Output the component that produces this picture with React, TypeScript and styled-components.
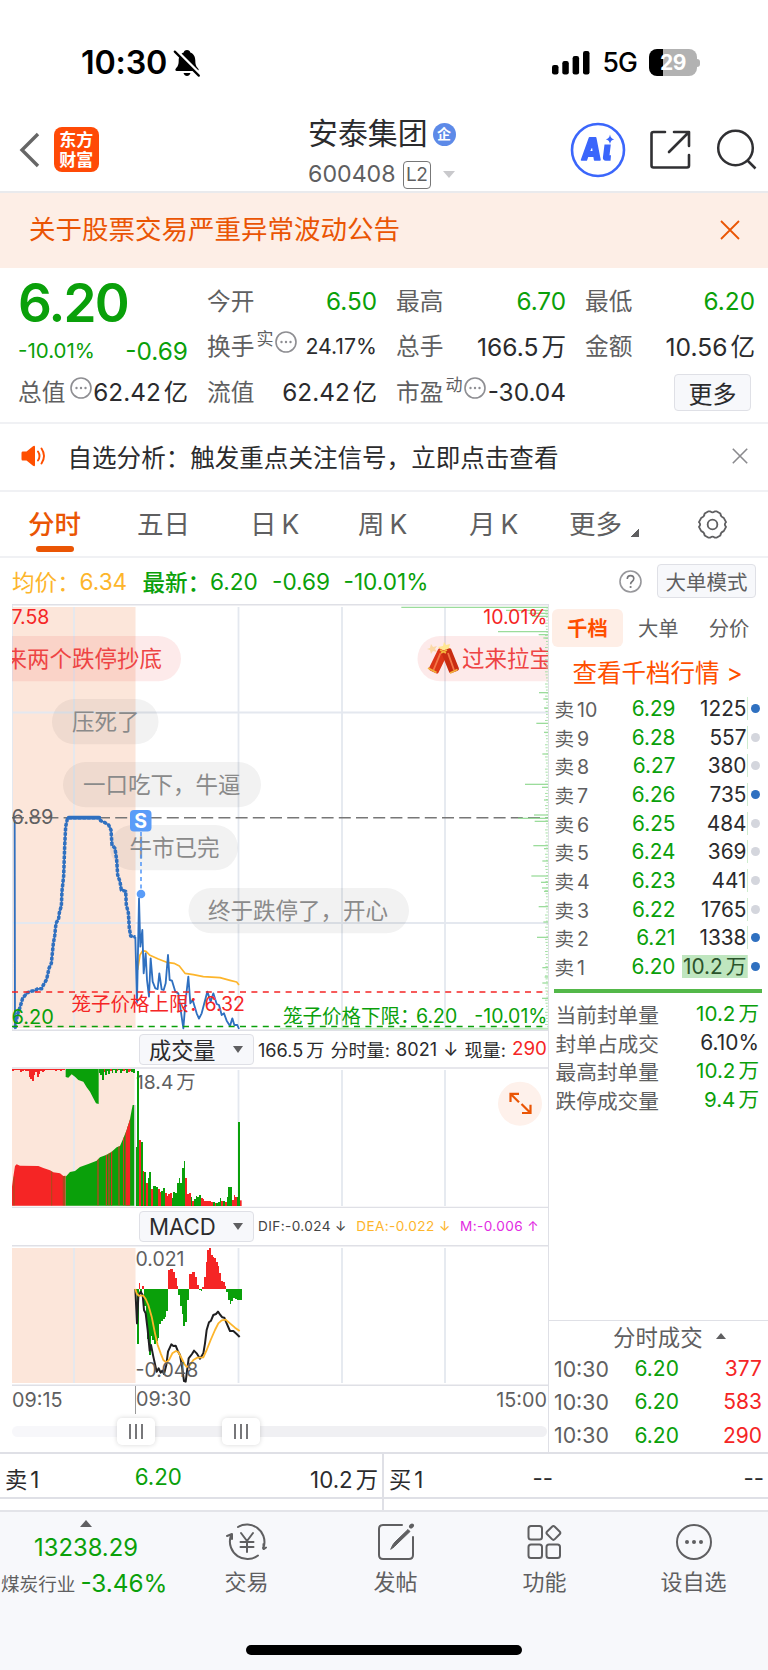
import React from "react";
import styled, { createGlobalStyle, css } from "styled-components";

const C = {
  green: "#0aa00a",
  red: "#f52525",
  orange: "#ea5504",
  bright: "#ff4f00",
  amber: "#fdb52b",
  ink: "#2b2b2d",
  mid: "#5f5f61",
  line: "#dfe0e6",
  soft: "#f0f1f4",
  panel: "#f7f8fb",
  blue: "#2f70c0",
};
const FONT = 'Inter, "Noto Sans CJK SC", sans-serif';

const Global = createGlobalStyle`
  * { box-sizing: border-box; }
  body { margin: 0; background: #fff; font-family: ${FONT}; color: ${C.ink}; }
  svg { display: block; flex: none; }
  svg text { font-family: ${FONT}; }
`;

const Page = styled.div`
  width: 768px;
  height: 1670px;
  overflow: hidden;
  display: flex;
  flex-direction: column;
  white-space: nowrap;
`;

const Txt = styled.span<{ $s: number; $c?: string; $w?: number; $ls?: number }>`
  font-size: ${(p) => p.$s}px;
  color: ${(p) => p.$c ?? "inherit"};
  font-weight: ${(p) => p.$w ?? 400};
  letter-spacing: ${(p) => p.$ls ?? 0}px;
  line-height: 1.2;
`;
const Unit = styled.span`
  margin-left: 3px;
`;

/* status bar */
const StatusBar = styled.div`
  height: 108px;
  padding: 18px 68px 0 81px;
  display: flex;
  align-items: center;
  justify-content: space-between;
  color: #000;
`;
const StatusGroup = styled.div<{ $gap: number }>`
  display: flex;
  align-items: center;
  gap: ${(p) => p.$gap}px;
`;
const Battery = styled.div`
  width: 48px;
  height: 27px;
  border-radius: 8px;
  background: linear-gradient(90deg, #000 14px, #b2b2b2 14px);
  color: #fff;
  font-size: 21px;
  font-weight: 700;
  line-height: 27px;
  text-align: center;
  letter-spacing: -0.5px;
`;
const BatteryNub = styled.div`
  width: 3px;
  height: 8px;
  margin-left: -12px;
  border-radius: 0 3px 3px 0;
  background: #b2b2b2;
`;

/* navigation */
const Nav = styled.div`
  height: 85px;
  border-bottom: 2px solid #e9eaed;
  padding: 3px 11px 0 19px;
  display: grid;
  grid-template-columns: 289px 1fr 187px;
`;
const NavLeft = styled.div`
  display: flex;
  align-items: center;
  gap: 13.5px;
  padding-bottom: 4px;
`;
const Brand = styled.div`
  width: 45.5px;
  height: 45.5px;
  border-radius: 8px;
  background: #ff4a06;
  color: #fff;
  font-size: 17px;
  font-weight: 700;
  line-height: 20px;
  text-align: center;
  padding-top: 2px;
  font-family: "Noto Sans CJK SC", sans-serif;
`;
const TitleBox = styled.div`
  display: flex;
  flex-direction: column;
`;
const TitleLine = styled.div<{ $h: number; $gap: number }>`
  height: ${(p) => p.$h}px;
  display: flex;
  align-items: center;
  gap: ${(p) => p.$gap}px;
`;
const CorpBadge = styled.div`
  width: 23px;
  height: 23px;
  border-radius: 50%;
  background: #5d8ae8;
  color: #fff;
  font-size: 14px;
  font-weight: 700;
  line-height: 22px;
  text-align: center;
`;
const LevelBadge = styled.div`
  width: 28px;
  height: 28px;
  margin-right: 5px;
  border: 1.5px solid #777;
  border-radius: 4px;
  font-size: 19px;
  line-height: 26px;
  letter-spacing: -0.6px;
  text-align: center;
  color: ${C.mid};
`;
const NavRight = styled.div`
  display: flex;
  align-items: center;
  justify-content: space-between;
  padding-bottom: 3px;
`;
const Caret = styled.div<{ $up?: boolean; $w: number; $h: number; $c: string }>`
  width: 0;
  height: 0;
  border-left: ${(p) => p.$w / 2}px solid transparent;
  border-right: ${(p) => p.$w / 2}px solid transparent;
  ${(p) =>
    p.$up
      ? css`border-bottom: ${p.$h}px solid ${p.$c};`
      : css`border-top: ${p.$h}px solid ${p.$c};`}
`;

const Banner = styled.div`
  height: 75px;
  padding: 0 28px 1px 29px;
  background: #fdeee6;
  display: flex;
  align-items: center;
  justify-content: space-between;
`;

/* key figures */
const Figures = styled.div`
  height: 156px;
  padding: 11px 13px 0 18px;
  display: grid;
  grid-template-columns: 170px 170px 170px 170px;
  column-gap: 19px;
  border-bottom: 2px solid ${C.soft};
`;
const FigCol = styled.div`
  display: flex;
  flex-direction: column;
`;
const FigCell = styled.div<{ $drop?: number }>`
  height: 45.5px;
  padding-top: ${(p) => p.$drop ?? 0}px;
  display: flex;
  align-items: center;
  justify-content: space-between;
`;
const LabelGroup = styled.div`
  display: flex;
  align-items: center;
`;
const Raised = styled.span`
  font-size: 17px;
  color: ${C.mid};
  margin: 0 2px 15px 2px;
  line-height: 1.1;
`;
const RaisedIcon = styled.span<{ $l?: number }>`
  margin: 0 0 10px ${(p) => p.$l ?? 0}px;
`;
const SmallButton = styled.div<{ $w: number; $h: number; $s: number; $c?: string; $r?: number }>`
  width: ${(p) => p.$w}px;
  height: ${(p) => p.$h}px;
  margin-right: ${(p) => p.$r ?? 0}px;
  border: 1.5px solid ${C.line};
  border-radius: 4px;
  background: ${C.panel};
  color: ${(p) => p.$c ?? C.ink};
  font-size: ${(p) => p.$s}px;
  display: flex;
  align-items: center;
  justify-content: center;
`;

const Notice = styled.div`
  height: 68px;
  padding: 0 20px 2px 21px;
  display: flex;
  align-items: center;
  border-bottom: 2px solid ${C.soft};
`;
const NoticeText = styled.div`
  flex: 1;
  padding-left: 20.5px;
  font-size: 24.55px;
`;

/* period tabs */
const Tabs = styled.div`
  height: 66px;
  padding: 0 40px 0 28px;
  display: grid;
  grid-template-columns: 109px 113px 108px 111px 100px 128px 30px;
  align-items: center;
  border-bottom: 2px solid ${C.soft};
`;
const Tab = styled.div<{ $on?: boolean }>`
  height: 64px;
  display: flex;
  flex-direction: column;
  align-items: flex-start;
  padding-top: 11.5px;
  font-size: 26.5px;
  line-height: 40px;
  font-weight: ${(p) => (p.$on ? 500 : 400)};
  color: ${(p) => (p.$on ? C.orange : C.mid)};
  &::after {
    content: "";
    width: 38px;
    height: 6px;
    border-radius: 3px;
    margin: 2.5px 0 0 8px;
    background: ${(p) => (p.$on ? C.orange : "transparent")};
  }
`;
const TabLabel = styled.span`
  display: flex;
  align-items: center;
  gap: 5px;
`;
const CornerMark = styled.i`
  width: 8px;
  height: 8px;
  margin: 18px 0 0 4px;
  background: linear-gradient(135deg, transparent 50%, ${C.mid} 50%);
`;

const InfoRow = styled.div`
  height: 46px;
  margin: 0 12px;
  display: flex;
  align-items: center;
  font-size: 22.6px;
`;
const InfoItem = styled.span<{ $c: string; $w: number; $b?: number }>`
  width: ${(p) => p.$w}px;
  color: ${(p) => p.$c};
  font-weight: ${(p) => p.$b ?? 400};
`;
const InfoTools = styled.div`
  margin-left: auto;
  display: flex;
  align-items: center;
  gap: 15px;
`;

/* body */
const Body = styled.div`
  height: 850px;
  display: grid;
  grid-template-columns: 549px 219px;
  border-bottom: 2px solid ${C.line};
`;
const Charts = styled.div`
  padding-left: 12px;
  border-right: 1.5px solid ${C.line};
  display: flex;
  flex-direction: column;
`;
const IndicatorRow = styled.div<{ $h: number }>`
  height: ${(p) => p.$h}px;
  padding-left: 127px;
  display: flex;
  align-items: center;
`;
const Picker = styled.div`
  width: 115px;
  height: 31px;
  margin-right: 4px;
  padding: 0 10px 0 9px;
  border: 1.5px solid ${C.line};
  border-radius: 4px;
  background: ${C.panel};
  display: flex;
  align-items: center;
  justify-content: space-between;
  font-size: 22.2px;
`;
const VolText = styled.div`
  width: 289px;
  display: flex;
  justify-content: space-between;
  align-items: center;
  font-size: 18.1px;
`;
const MacdText = styled.div`
  width: 281px;
  display: flex;
  justify-content: space-between;
`;
const TimeAxis = styled.div`
  height: 28px;
  display: grid;
  grid-template-columns: 123.5px 1fr auto;
  font-size: 19.8px;
  line-height: 27px;
  color: ${C.mid};
  padding-top: 1px;
  padding-right: 1px;
`;
const AxisMark = styled.span`
  border-left: 1px solid #999;
  margin-left: -0.5px;
  margin-top: -1px;
`;
const Slider = styled.div`
  height: 11px;
  margin-top: 12px;
  margin-right: 1px;
  border-radius: 6px;
  background: linear-gradient(90deg, #f7f7fa 124px, #f0f0f3 124px);
  display: flex;
  align-items: center;
  gap: 67px;
  padding-left: 105px;
`;
const Handle = styled.div`
  width: 38px;
  height: 27px;
  border-radius: 5px;
  background: #fff;
  box-shadow: 0 0 5px rgba(0, 0, 0, 0.16);
  display: flex;
  align-items: center;
  justify-content: center;
  gap: 4px;
  i {
    width: 2px;
    height: 15px;
    background: #77777a;
  }
`;

const Side = styled.div`
  display: flex;
  flex-direction: column;
`;
const SideTabs = styled.div`
  height: 48px;
  padding: 5px 0 0 3px;
  display: flex;
`;
const SideTab = styled.div<{ $on?: boolean }>`
  width: 70.8px;
  height: 38px;
  border-radius: 6px;
  line-height: 39px;
  text-align: center;
  font-size: 20.3px;
  background: ${(p) => (p.$on ? "#feeee6" : "transparent")};
  color: ${(p) => (p.$on ? C.bright : C.mid)};
  font-weight: ${(p) => (p.$on ? 700 : 400)};
`;
const DepthLink = styled.div`
  height: 42px;
  padding-left: 23.5px;
  color: ${C.bright};
  font-size: 24.5px;
  line-height: 42px;
`;
const DepthRow = styled.div`
  height: 28.67px;
  display: grid;
  grid-template-columns: 60px 61px 72px 1fr;
  align-items: center;
  padding-left: 5.5px;
  font-size: 20.8px;
`;
const DepthLabel = styled.span`
  font-size: 19.6px;
  color: ${C.mid};
`;
const DepthPrice = styled.span`
  color: ${C.green};
  text-align: right;
`;
const DepthQty = styled.span<{ $hot?: boolean }>`
  justify-self: end;
  height: 23px;
  line-height: 23px;
  padding-left: 1px;
  text-align: right;
  border-right: 1px solid #cfeccf;
  color: ${(p) => (p.$hot ? "#2b532b" : C.ink)};
  background: ${(p) => (p.$hot ? "#bfe6bf" : "transparent")};
`;
const Dot = styled.i<{ $on?: boolean }>`
  width: 9px;
  height: 9px;
  border-radius: 50%;
  margin-left: 3.5px;
  background: ${(p) => (p.$on ? C.blue : "#d4d6dd")};
`;
const SealBar = styled.div`
  height: 4px;
  margin: 8px 6px 7px 5px;
  background: #53b849;
`;
const SealRow = styled.div`
  height: 28.67px;
  padding: 0 9px 0 6.5px;
  display: flex;
  align-items: center;
  justify-content: space-between;
  font-size: 20.7px;
  color: ${C.mid};
`;
const Ticks = styled.div`
  margin-top: auto;
  border-top: 1.5px solid ${C.line};
`;
const TicksHead = styled.div`
  height: 31px;
  padding-left: 64px;
  display: flex;
  align-items: center;
  gap: 13px;
  font-size: 22.4px;
  color: ${C.mid};
`;
const TickRow = styled.div`
  height: 33.4px;
  padding: 0 6px 0 5px;
  display: grid;
  grid-template-columns: 80.5px 1fr auto;
  align-items: center;
  font-size: 21.3px;
  color: ${C.mid};
`;

/* quote strip and bottom bar */
const QuoteStrip = styled.div`
  height: 58px;
  display: grid;
  grid-template-columns: 384px 384px;
  border-bottom: 2px solid #e3e4e9;
`;
const Quote = styled.div<{ $left?: boolean }>`
  border-right: ${(p) => (p.$left ? `2px solid ${C.line}` : "none")};
  &::after {
    content: "";
    display: block;
    height: 2px;
    background: ${C.line};
  }
`;
const QuoteLine = styled.div`
  height: 43px;
  padding: 4px 4px 0 5px;
  display: grid;
  grid-template-columns: 80px 1fr 1fr;
  justify-items: center;
  align-items: center;
  font-size: 22.3px;
  span:first-child {
    justify-self: start;
  }
  span:last-child {
    justify-self: end;
  }
`;
const Bottom = styled.div`
  flex: 1;
  background: ${C.panel};
  display: flex;
  flex-direction: column;
  align-items: center;
`;
const BottomRow = styled.div`
  width: 768px;
  height: 133px;
  display: grid;
  grid-template-columns: 172px 149px 149px 149px 149px;
`;
const Index = styled.div`
  padding-top: 8px;
  display: flex;
  flex-direction: column;
  align-items: center;
`;
const IndexName = styled.div`
  display: flex;
  align-items: center;
  align-self: flex-start;
  gap: 5px;
  padding-left: 1px;
  height: 28px;
`;
const Action = styled.div`
  padding-top: 9px;
  display: flex;
  flex-direction: column;
  align-items: center;
  font-size: 22px;
  line-height: 32px;
  gap: 3px;
  color: ${C.mid};
`;
const HomeBar = styled.div`
  width: 276px;
  height: 10px;
  border-radius: 5px;
  background: #000;
`;

/* icons */
const Cross = ({ s, c, w }: { s: number; c: string; w: number }) => (
  <svg width={s} height={s} viewBox="0 0 20 20" fill="none" stroke={c} strokeWidth={w}>
    <path d="M1 1 19 19M19 1 1 19" />
  </svg>
);
const Dots = () => (
  <svg width="22" height="22" viewBox="0 0 22 22" fill="none" stroke="#8e8e92" strokeWidth="1.6">
    <circle cx="11" cy="11" r="10" />
    <g fill="#8e8e92" stroke="none">
      <circle cx="6.5" cy="11" r="1.2" />
      <circle cx="11" cy="11" r="1.2" />
      <circle cx="15.5" cy="11" r="1.2" />
    </g>
  </svg>
);
const BellOff = () => (
  <svg width="28" height="28" viewBox="0 0 28 28">
    <path d="M14 1c2 0 3 1 3.300 2.400 3.600 1.200 5 4.600 5 8.200 0 5 1.400 6.400 3 8.200.8 1 .2 2.200-1 2.200H3.700c-1.200 0-1.800-1.200-1-2.200 1.600-1.800 3-3.200 3-8.200 0-3.600 1.400-7 5-8.200C11 2 12 1 14 1zM10.500 24h7c-.6 2-1.900 3-3.500 3s-2.900-1-3.500-3z" />
    <path d="M3 1.500 27 25.500" stroke="#fff" strokeWidth="3.500" />
    <path d="M1.800 2.600 25.800 26.600" stroke="#000" strokeWidth="2.200" strokeLinecap="round" />
  </svg>
);
const Signal = () => (
  <svg width="38" height="24" viewBox="0 0 38 24">
    <rect x="0" y="14" width="6.500" height="9.500" rx="2.200" />
    <rect x="10.300" y="10" width="6.500" height="13.500" rx="2.200" />
    <rect x="20.600" y="5" width="6.500" height="18.500" rx="2.200" />
    <rect x="31" y="0" width="6.500" height="23.500" rx="2.200" />
  </svg>
);
const AiIcon = () => (
  <svg width="56" height="56" viewBox="0 0 56 56">
    <circle cx="28" cy="28" r="26" fill="none" stroke="#3b66fb" strokeWidth="2.600" />
    <g fill="#3b66fb">
      <path
        fillRule="evenodd"
        stroke="#3b66fb"
        strokeWidth="1.500"
        strokeLinejoin="round"
        d="M11.500 38 19.500 15.800h6.200L30 38h-5.400l-.6-3.800h-6.300L16.400 38zM19 29.800h4.400l-.9-7z"
      />
      <path d="M34.500 22.500h6.300l-1.300 10.800h1.500l-.5 5.400h-4.600c-2 0-3.200-1.300-3-3.200z" />
      <path d="M40 12.500c.6 3 1.600 4.100 4.200 4.800-2.600.8-3.600 1.800-4.200 4.800-.6-3-1.600-4-4.200-4.800 2.600-.7 3.600-1.800 4.200-4.800z" />
    </g>
  </svg>
);
const ShareIcon = () => (
  <svg width="42" height="42" viewBox="0 0 42 42" fill="none" stroke="#303033" strokeWidth="2.600" strokeLinecap="round" strokeLinejoin="round">
    <path d="M15 3H3.500Q1.500 3 1.500 5v31.500q0 2 2 2h33.500q2 0 2-2V26" />
    <path d="M24 3h15v14M38.500 3.500 19 23" />
  </svg>
);
const SearchIcon = () => (
  <svg width="42" height="42" viewBox="0 0 42 42" fill="none" stroke="#303033" strokeWidth="2.500">
    <circle cx="20.500" cy="19" r="17.300" />
    <path d="m32.500 31.500 8 8" />
  </svg>
);
const Speaker = () => (
  <svg width="26" height="22" viewBox="0 0 26 22">
    <path d="M1.500 6.500h4L12 1.200q2-1 2 .9v17.800q0 1.900-2 .9L5.500 15.500h-4Q.5 15.500.5 14V8q0-1.500 1-1.500z" fill={C.bright} />
    <path d="M17 6.500q3 4.500 0 9M20.500 3.500q5 7.500 0 15" fill="none" stroke={C.bright} strokeWidth="1.900" strokeLinecap="round" />
  </svg>
);
const Gear = () => (
  <svg width="31" height="31" viewBox="0 0 32 32" fill="none" stroke={C.mid} strokeWidth="1.900" strokeLinejoin="round">
    <path d="M11.500 2.500h2.200q2.300 2 4.600 0h2.200l3.600 2.200q.2 3.300 3.500 4.500l2.400 4.400q-2.500 2.400 0 4.800l-2.400 4.400q-3.300 1.200-3.500 4.500l-3.600 2.200h-2.200q-2.300-2-4.600 0h-2.200l-3.600-2.200q-.2-3.300-3.500-4.500L2 18.400q2.500-2.400 0-4.800l2.400-4.400q3.300-1.200 3.500-4.500z" />
    <circle cx="16" cy="16" r="5" />
  </svg>
);
const Help = () => (
  <svg width="23" height="23" viewBox="0 0 23 23" fill="none">
    <circle cx="11.500" cy="11.500" r="10.500" stroke="#97979b" strokeWidth="1.600" />
    <path d="M8.300 9q0-3.400 3.300-3.400 3.200 0 3.200 3 0 1.700-1.700 2.900-1.500 1-1.500 2.700" stroke="#77777b" strokeWidth="1.600" />
    <circle cx="11.600" cy="17" r="1.100" fill="#77777b" />
  </svg>
);
const actionIcon = { width: 42, height: 42, viewBox: "0 0 42 42", fill: "none", stroke: C.mid, strokeWidth: 2, strokeLinecap: "round" as const, strokeLinejoin: "round" as const };
const TradeIcon = () => (
  <svg {...actionIcon}>
    <path d="M12 6A17.500 17.500 0 0 1 38 25l-1 2M38 28l2-1.500M37.500 28V23M32 34.500A17.500 17.500 0 0 1 4.500 16l.4-2M1 15l5-2v5" />
    <path d="M15 12l6 8 6-8M21 20v11M14.500 21h13M14.500 26h13" />
  </svg>
);
const PostIcon = () => (
  <svg {...actionIcon}>
    <path d="M27 4H8Q4 4 4 8v26q0 4 4 4h26q4 0 4-4V16" />
    <path d="M16 28c1-3 2-5 5-8L33 8.500l2 2L23 22c-3 3-4 4.500-7 6z" fill={C.mid} strokeWidth="1" />
    <path d="m36 5.500 1-1" strokeWidth="4" />
  </svg>
);
const AppsIcon = () => (
  <svg {...actionIcon}>
    <rect x="4.500" y="5" width="13.500" height="13.500" rx="2.500" />
    <rect x="4.500" y="23.500" width="13.500" height="13.500" rx="2.500" />
    <rect x="22.500" y="23.500" width="13.500" height="13.500" rx="2.500" />
    <rect x="24" y="6.500" width="10.800" height="10.800" rx="2" transform="rotate(45 29.400 11.900)" />
  </svg>
);
const MoreIcon = () => (
  <svg {...actionIcon}>
    <circle cx="21" cy="21" r="17" />
    <g fill={C.mid} stroke="none">
      <circle cx="14" cy="21" r="2" />
      <circle cx="21" cy="21" r="2" />
      <circle cx="28" cy="21" r="2" />
    </g>
  </svg>
);

/* price chart */
const AUCTION =
  "44,660 45,1285 52,1245 60,1222 68,1195 80,1180 90,1174 105,1172 112,1167 125,1166 130,1155 140,1138 147,1105 154,1090 157,1060 160,1030 164,1008 168,970 176,955 178,938 184,918 186,873 191,828 194,740 197,680 202,657 206,653 298,653 302,662 315,668 326,675 333,690 336,735 345,745 350,780 353,825 360,845 364,870 377,874 379,915 385,938 388,985 392,1008 406,1011";
const PRICE =
  "406,1011 411,1208 417,895 421,1040 427,990 431,1120 437,1060 441,1140 447,1190 452,1075 458,1145 466,1165 473,1167 478,1120 485,1168 491,1170 497,1150 504,1065 509,1140 516,1142 526,1175 535,1180 542,1230 550,1285 557,1200 565,1130 571,1210 578,1200 590,1240 597,1256 605,1240 622,1175 632,1205 640,1180 650,1212 657,1215 665,1245 672,1240 680,1262 690,1278 697,1255 703,1275 712,1275 717,1287";
const AVG =
  "413,1110 420,1065 428,1052 438,1054 450,1066 475,1077 500,1087 522,1090 538,1098 555,1120 580,1124 610,1130 660,1133 690,1141 710,1146 717,1155";
const LEVELS: [number, number][] = [
  [22, 440], [31, 126], [40, 58], [49, 48], [95, 150], [104, 28], [114, 14], [278, 27], [297, 14], [324, 12], [370, 35],
  [397, 12], [462, 17], [553, 69], [562, 18], [600, 12], [645, 42], [655, 90], [664, 40], [737, 44], [746, 12], [783, 17],
  [828, 50], [847, 21], [864, 18], [874, 12], [920, 28], [966, 14], [1012, 33], [1103, 17], [1131, 10], [1149, 17], [1195, 18],
];
const Grid = ({ top, bottom }: { top: number; bottom: number }) => (
  <g stroke="#e4e8ef" strokeWidth="1.800">
    {[74, 238.5, 342, 445].map((x) => (
      <path key={x} d={`M${x} ${top}V${bottom}`} />
    ))}
  </g>
);
const Bubble = ({ x, y, w, tx, text, hot }: { x: number; y: number; w: number; tx: number; text: string; hot?: boolean }) => (
  <g>
    <rect x={x} y={y} width={w} height="45.300" rx="22.600" fill={hot ? "rgba(240,50,50,.1)" : "rgba(20,20,20,.055)"} />
    <text x={tx} y={y + 31} fontSize="22.500" fill={hot ? "#ee4444" : "#8a8a8a"}>
      {text}
    </text>
  </g>
);
const PriceChart = () => (
  <svg width="536" height="427" viewBox="12 604 536 427">
    <rect x="12" y="607" width="123.500" height="421" fill="#fce6da" />
    <Grid top={607} bottom={1028} />
    <path d="M12 604.800H548M12 1030.300H548" stroke={C.line} strokeWidth="1.500" />
    <path d="M12.500 605V1030" stroke="#e4e8ef" />
    <path d="M12 712.500H548M12 923H548" stroke="#e4e8ef" strokeWidth="1.800" />
    <path d="M12 817.700H548" stroke="#777" strokeWidth="1.400" strokeDasharray="12 5.200" />
    <Bubble x={-20} y={636} w={201} tx={4.5} text="来两个跌停抄底" hot />
    <Bubble x={417.500} y={636} w={170} tx={462} text="过来拉宝" hot />
    <Bubble x={52} y={699} w={106.500} tx={72} text="压死了" />
    <Bubble x={63} y={762} w={198} tx={83} text="一口吃下，牛逼" />
    <Bubble x={110} y={825} w={128} tx={129.5} text="牛市已完" />
    <Bubble x={188.500} y={888} w={220.500} tx={208} text="终于跌停了，开心" />
    <g>
      <path d="m431 644 2 3 4-1-2 3 2 3-4-1-2 3-1-4-3-1 3-1z" fill="#fbd9a8" />
      <path d="m444 642 2 3 4-1-1 4 3 2-4 1-1 4-3-2-4 1 1-4-3-3 5-1z" fill="#ffe793" />
      <rect x="433" y="649" width="10.500" height="24" rx="2" fill="#dc3518" transform="rotate(26 438 661)" />
      <rect x="445" y="649" width="10.500" height="24" rx="2" fill="#c92c12" transform="rotate(-22 449.500 661)" />
      <path d="m440.500 653-7 17M448 653l6 17" stroke="#f47748" strokeWidth="1.800" />
      <path d="m428 668 8.500 4.500M450 673l7.500-3.500M440 650l6 3M441 653l6-3" stroke="#f2b23c" strokeWidth="1.800" />
    </g>
    <g stroke="#9bdc9b" strokeWidth="1.300">
      {Array.from({ length: 138 }, (_, i) => (
        <path key={i} d={`M547.800 ${608 + i * 3.04}h${-(1.3 + ((i * 7) % 4) * 0.5)}`} strokeWidth="0.900" />
      ))}
      {LEVELS.map(([y, l]) => (
        <path key={y} d={`M548 ${600 + y / 3}h${-l / 3}`} />
      ))}
      <path d="M280 1028.700H548" strokeWidth="1.800" opacity=".65" />
    </g>
    <g transform="translate(0 600) scale(.33333)" fill="none" strokeLinejoin="round">
      <polyline points={AVG} stroke={C.amber} strokeWidth="5" />
      <polyline points={AUCTION} stroke={C.blue} strokeWidth="5.500" />
      <polyline points={AUCTION.slice(AUCTION.indexOf(" ") + 1)} stroke={C.blue} strokeWidth="10.500" strokeDasharray="10 4" />
      <path d="M206 653H298" stroke={C.blue} strokeWidth="11" strokeLinecap="round" />
      <polyline points={PRICE} stroke={C.blue} strokeWidth="5.500" />
    </g>
    <path d="M12 992H548" stroke={C.red} strokeWidth="1.700" strokeDasharray="6 5.400" />
    <path d="M12 1026.500H548" stroke={C.green} strokeWidth="1.700" strokeDasharray="6 5.400" />
    <path d="M141 832V891" stroke="#4d94f8" strokeWidth="1.500" strokeDasharray="4 3.500" />
    <circle cx="141" cy="894" r="4.300" fill="#5a9cf8" />
    <rect x="130" y="810" width="21.500" height="21.500" rx="4" fill="#5a9cf8" />
    <text x="140.700" y="827.700" fontSize="19.500" fontWeight="700" fill="#fff" textAnchor="middle">S</text>
    <g fontSize="19.500">
      <text x="11.500" y="624" fill={C.red}>7.58</text>
      <text x="547.500" y="624" fill={C.red} textAnchor="end">10.01%</text>
      <text x="11.500" y="824" fill={C.mid} fontSize="20">6.89</text>
      <text x="11.500" y="1024" fill={C.green} fontSize="20">6.20</text>
      <text x="71.500" y="1011" fill={C.red}>笼子价格上限：</text>
      <text x="204.500" y="1011" fill={C.red}>6.32</text>
      <text x="283" y="1022.500" fill={C.green}>笼子价格下限：</text>
      <text x="416" y="1022.500" fill={C.green}>6.20</text>
      <text x="547.500" y="1023" fill={C.green} textAnchor="end">-10.01%</text>
    </g>
  </svg>
);

/* volume chart */
const VOL: [number, number][] = [
  [0, 352], [0, 122], [1, 331], [0, 335], [1, 424], [0, 426], [1, 458], [0, 443], [0, 427], [1, 476], [0, 468], [0, 469],
  [0, 471], [1, 476], [1, 485], [0, 483], [0, 475], [1, 488], [1, 497], [1, 493], [1, 489], [0, 505], [0, 487], [0, 489],
  [0, 458], [0, 444], [0, 459], [0, 413], [0, 393], [1, 443], [1, 492], [1, 489], [0, 501], [1, 513], [0, 508], [0, 497],
  [0, 500], [0, 494], [1, 504], [1, 508], [1, 513], [1, 513], [1, 512], [1, 513], [1, 515], [0, 515], [1, 519], [0, 519],
  [0, 516], [0, 504], [1, 513], [0, 512], [1, 516], [0, 501], [0, 471], [0, 471], [1, 509], [1, 495], [1, 500], [0, 500],
];
const HANG = [6, 4, 4, 4, 5, 9, 6, 5, 6, 8, 24, 32, 36, 18, 9, 26, 15, 6, 10, 8, 4, 4, 5, 4, 5, 5, 7, 4, 4, 7, 4, 4];
const HANG2 = [14, 20, 34, 10, 18, 7, 16, 6, 12, 5, 14, 7, 4, 12, 6, 8, 4, 13, 10, 6, 10, 14];
const AREA =
  "M197 527V440L210 426 225 423 240 411 265 402 290 392 300 382 320 374 335 365 350 352 360 348 370 325 380 300 390 268 395 240 398 225H403V527z";
const VolumeChart = () => (
  <svg width="536" height="141" viewBox="12 1067 536 141">
    <defs>
      <clipPath id="auction-area">
        <path d={AREA} />
      </clipPath>
    </defs>
    <rect x="12" y="1069" width="122.500" height="137" fill="#fce6da" />
    <Grid top={1070} bottom={1206} />
    <path d="M12 1068H548M12 1207.500H548" stroke={C.line} strokeWidth="1.600" />
    <text x="136" y="1089" fontSize="19.300" fill={C.mid}>
      18.4<tspan dx="3">万</tspan>
    </text>
    <g transform="translate(0 1030) scale(.33333)">
      <path d="M36 527V470L40 440 45 408 50 403 60 407 115 408 130 414 150 421 160 427 180 430 190 438 197 437V527z" fill={C.red} />
      <path d="M42 440V527M155 424V527M190 438V527M194 438V527" stroke={C.green} strokeWidth="1.500" opacity=".7" />
      <path d={AREA} fill={C.green} />
      <path d="M294 380V527M319 360V527M327 360V527M335 355V527M357 340V527M371 300V527M383 230V527" stroke={C.red} strokeWidth="3" clipPath="url(#auction-area)" />
      <path d="M383.500 220V527" stroke={C.red} strokeWidth="14" clipPath="url(#auction-area)" />
      <path d="M406 225V527" stroke={C.line} strokeWidth="4" />
      <path d="M197 117V141L205 143 215 133 225 140 235 150 250 155 260 172 270 185 280 205 288 220 296 222V117z" fill={C.green} />
      <g shapeRendering="crispEdges">
        {HANG.map((h, i) => (
          <rect key={i} x={36 + i * 5} y="116" width="5.200" height={h} fill={C.red} />
        ))}
        {HANG2.map((h, i) => (
          <rect key={i} x={296 + i * 4.9} y="116" width="4.900" height={h} fill={i % 4 === 3 || i === 18 ? C.red : C.green} />
        ))}
        {VOL.map(([r, y], i) => (
          <rect key={i} x={407 + i * 5.15} y={y} width="5.150" height={528 - y} fill={r ? C.red : C.green} />
        ))}
      </g>
      <rect x="714" y="276" width="6" height="252" fill={C.green} />
      <rect x="720" y="511" width="5" height="17" fill={C.red} />
    </g>
    <circle cx="520" cy="1103.700" r="22" fill="#fef1eb" />
    <path d="M510.500 1102v-8.200h8.500M511 1094.300l8 8M522 1113h8.500v-8.300M530 1112.500l-8.500-8.500" fill="none" stroke={C.orange} strokeWidth="2.200" />
  </svg>
);

/* MACD chart */
const HIST = [
  -10, -165, 18, -10, 8, -50, -80, -150, -198, -140, -152, -165, -155, -148, -105, -95, -90, -85, -65, 58, 60, 61, 50, 33, 8, -18, -50, -75, -112,
  -100, -33, 44, 46, 52, 50, 36, 13, -4, -5, 6, 36, 82, 118, 124, 102, 97, 93, 80, 70, 49, 25, 22, 8, -10, -32, -45, -35, -28, -30, -32, -32, -34,
];
const MacdChart = () => (
  <svg width="536" height="141" viewBox="12 1245 536 141">
    <rect x="12" y="1248" width="123.500" height="135" fill="#fce6da" />
    <Grid top={1248} bottom={1383} />
    <path d="M12 1245.700H548M12 1385.200H548" stroke={C.line} strokeWidth="1.500" />
    <g transform="translate(0 1230) scale(.33333)">
      <g shapeRendering="crispEdges">
        {HIST.map((v, i) => (
          <rect key={i} x={406 + i * 5.15} y={v > 0 ? 177 - v : 177} width="5.150" height={Math.abs(v)} fill={v > 0 ? C.red : C.green} />
        ))}
      </g>
      <polyline
        points="406,177 411,280 415,200 422,185 428,195 432,240 437,250 443,300 449,362 453,345 460,380 470,425 476,415 482,428 487,422 492,432 499,405 504,365 514,343 520,348 527,347 533,362 540,375 546,410 552,453 557,455 566,385 576,372 582,362 590,370 600,386 610,370 615,340 620,300 627,277 633,272 640,255 648,252 654,245 661,255 667,262 673,263 680,280 690,303 700,303 710,312 719,321"
        fill="none" stroke="#1f1f21" strokeWidth="6" strokeLinejoin="round"
      />
      <polyline
        points="406,177 410,190 416,197 430,197 437,207 445,225 455,260 465,310 473,345 482,370 490,390 499,398 508,388 517,370 528,363 535,366 545,385 553,402 560,411 570,405 580,390 592,383 610,382 620,360 632,330 645,300 655,280 665,271 677,269 690,280 705,293 719,303"
        fill="none" stroke={C.amber} strokeWidth="5.500" strokeLinejoin="round"
      />
    </g>
    <g fontSize="19.500" fill={C.mid}>
      <text x="135.500" y="1266">0.021</text>
      <text x="135.500" y="1376.500">-0.048</text>
    </g>
  </svg>
);

const Wan = ({ n, u = "万" }: { n: string; u?: string }) => (
  <>
    {n}
    <Unit>{u}</Unit>
  </>
);

const DEPTH: [number, string, React.ReactNode, boolean][] = [
  [10, "6.29", "1225", true],
  [9, "6.28", "557", false],
  [8, "6.27", "380", false],
  [7, "6.26", "735", true],
  [6, "6.25", "484", false],
  [5, "6.24", "369", false],
  [4, "6.23", "441", false],
  [3, "6.22", "1765", false],
  [2, "6.21", "1338", true],
  [1, "6.20", <Wan n="10.2" />, true],
];

export default function App() {
  return (
    <Page>
      <Global />
      <StatusBar>
        <StatusGroup $gap={6}>
          <Txt $s={32.3} $w={600} $ls={-0.2}>10:30</Txt>
          <BellOff />
        </StatusGroup>
        <StatusGroup $gap={12}>
          <Signal />
          <Txt $s={26.5} $w={500} $ls={-0.8}>5G</Txt>
          <Battery>29</Battery>
          <BatteryNub />
        </StatusGroup>
      </StatusBar>

      <Nav>
        <NavLeft>
          <svg width="21" height="36" viewBox="0 0 21 36" fill="none" stroke="#666" strokeWidth="3.400">
            <path d="M19 2 3 18 19 34" />
          </svg>
          <Brand>
            东方
            <br />
            财富
          </Brand>
        </NavLeft>
        <TitleBox>
          <TitleLine $h={46} $gap={5}>
            <Txt $s={29.9}>安泰集团</Txt>
            <CorpBadge>企</CorpBadge>
          </TitleLine>
          <TitleLine $h={35} $gap={7}>
            <Txt $s={23.2}>
              <Txt $s={23.2} $c={C.mid}>600408</Txt>
            </Txt>
            <LevelBadge>L2</LevelBadge>
            <Caret $w={13} $h={7} $c="#c9c9cc" />
          </TitleLine>
        </TitleBox>
        <NavRight>
          <AiIcon />
          <ShareIcon />
          <SearchIcon />
        </NavRight>
      </Nav>

      <Banner>
        <Txt $s={26.5} $c={C.orange}>关于股票交易严重异常波动公告</Txt>
        <Cross s={20} c={C.orange} w={1.8} />
      </Banner>

      <Figures>
        <FigCol>
          <FigCell $drop={4}>
            <Txt $s={53} $w={600} $ls={-1.8} $c={C.green}>6.20</Txt>
          </FigCell>
          <FigCell $drop={9}>
            <Txt $s={20.5} $c={C.green}>-10.01%</Txt>
            <Txt $s={24.4} $c={C.green}>-0.69</Txt>
          </FigCell>
          <FigCell>
            <LabelGroup>
              <Txt $s={23.7} $c={C.mid}>总值</Txt>
              <RaisedIcon $l={5}><Dots /></RaisedIcon>
            </LabelGroup>
            <Txt $s={24.3}><Wan n="62.42" u="亿" /></Txt>
          </FigCell>
        </FigCol>
        <FigCol>
          <FigCell>
            <Txt $s={23.7} $c={C.mid}>今开</Txt>
            <Txt $s={24.3} $c={C.green}>6.50</Txt>
          </FigCell>
          <FigCell>
            <LabelGroup>
              <Txt $s={23.7} $c={C.mid}>换手</Txt>
              <Raised>实</Raised>
              <RaisedIcon><Dots /></RaisedIcon>
            </LabelGroup>
            <Txt $s={21.3}>24.17%</Txt>
          </FigCell>
          <FigCell>
            <Txt $s={23.7} $c={C.mid}>流值</Txt>
            <Txt $s={24.3}><Wan n="62.42" u="亿" /></Txt>
          </FigCell>
        </FigCol>
        <FigCol>
          <FigCell>
            <Txt $s={23.7} $c={C.mid}>最高</Txt>
            <Txt $s={24.3} $c={C.green}>6.70</Txt>
          </FigCell>
          <FigCell>
            <Txt $s={23.7} $c={C.mid}>总手</Txt>
            <Txt $s={24.6}><Wan n="166.5" /></Txt>
          </FigCell>
          <FigCell>
            <LabelGroup>
              <Txt $s={23.7} $c={C.mid}>市盈</Txt>
              <Raised>动</Raised>
              <RaisedIcon><Dots /></RaisedIcon>
            </LabelGroup>
            <Txt $s={24.4}>-30.04</Txt>
          </FigCell>
        </FigCol>
        <FigCol>
          <FigCell>
            <Txt $s={23.7} $c={C.mid}>最低</Txt>
            <Txt $s={24.3} $c={C.green}>6.20</Txt>
          </FigCell>
          <FigCell>
            <Txt $s={23.7} $c={C.mid}>金额</Txt>
            <Txt $s={24.6}><Wan n="10.56" u="亿" /></Txt>
          </FigCell>
          <FigCell>
            <span />
            <SmallButton $w={77} $h={37} $s={24} $r={4}>更多</SmallButton>
          </FigCell>
        </FigCol>
      </Figures>

      <Notice>
        <Speaker />
        <NoticeText>自选分析：触发重点关注信号，立即点击查看</NoticeText>
        <Cross s={16} c="#8a8a8e" w={2} />
      </Notice>

      <Tabs>
        <Tab $on>分时</Tab>
        <Tab>五日</Tab>
        <Tab><TabLabel>日<span>K</span></TabLabel></Tab>
        <Tab><TabLabel>周<span>K</span></TabLabel></Tab>
        <Tab><TabLabel>月<span>K</span></TabLabel></Tab>
        <Tab><TabLabel>更多<CornerMark /></TabLabel></Tab>
        <Gear />
      </Tabs>

      <InfoRow>
        <InfoItem $c={C.amber} $w={67.5}>均价：</InfoItem>
        <InfoItem $c={C.amber} $w={63}>6.34</InfoItem>
        <InfoItem $c={C.green} $w={67.5} $b={500}>最新：</InfoItem>
        <InfoItem $c={C.green} $w={62}>6.20</InfoItem>
        <InfoItem $c={C.green} $w={71.5}>-0.69</InfoItem>
        <InfoItem $c={C.green} $w={90}>-10.01%</InfoItem>
        <InfoTools>
          <Help />
          <SmallButton $w={99} $h={34} $s={20.5} $c={C.mid}>大单模式</SmallButton>
        </InfoTools>
      </InfoRow>

      <Body>
        <Charts>
          <PriceChart />
          <IndicatorRow $h={36}>
            <Picker>
              成交量
              <Caret $w={10} $h={7} $c={C.mid} />
            </Picker>
            <VolText>
              <span><Wan n="166.5" /></span>
              <span>分时量:</span>
              <span>8021</span>
              <span>↓</span>
              <span>现量:</span>
              <Txt $s={18.8} $c={C.red}>290</Txt>
            </VolText>
          </IndicatorRow>
          <VolumeChart />
          <IndicatorRow $h={37}>
            <Picker>
              MACD
              <Caret $w={10} $h={7} $c={C.mid} />
            </Picker>
            <MacdText>
              <Txt $s={13.6} $ls={0.4} $c="#444">DIF:-0.024 ↓</Txt>
              <Txt $s={13.6} $ls={0.4} $c={C.amber}>DEA:-0.022 ↓</Txt>
              <Txt $s={13.6} $ls={0.4} $c="#e22be2">M:-0.006 ↑</Txt>
            </MacdText>
          </IndicatorRow>
          <MacdChart />
          <TimeAxis>
            <span>09:15</span>
            <AxisMark>09:30</AxisMark>
            <span>15:00</span>
          </TimeAxis>
          <Slider>
            <Handle><i /><i /><i /></Handle>
            <Handle><i /><i /><i /></Handle>
          </Slider>
        </Charts>

        <Side>
          <SideTabs>
            <SideTab $on>千档</SideTab>
            <SideTab>大单</SideTab>
            <SideTab>分价</SideTab>
          </SideTabs>
          <DepthLink>查看千档行情 &gt;</DepthLink>
          {DEPTH.map(([n, price, qty, on]) => (
            <DepthRow key={n}>
              <DepthLabel>
                卖<Unit>{n}</Unit>
              </DepthLabel>
              <DepthPrice>{price}</DepthPrice>
              <DepthQty $hot={n === 1}>{qty}</DepthQty>
              <Dot $on={on} />
            </DepthRow>
          ))}
          <SealBar />
          <SealRow>
            当前封单量
            <Txt $s={20.6} $c={C.green}><Wan n="10.2" /></Txt>
          </SealRow>
          <SealRow>
            封单占成交
            <Txt $s={20.9} $c={C.ink}>6.10%</Txt>
          </SealRow>
          <SealRow>
            最高封单量
            <Txt $s={20.6} $c={C.green}><Wan n="10.2" /></Txt>
          </SealRow>
          <SealRow>
            跌停成交量
            <Txt $s={20.6} $c={C.green}><Wan n="9.4" /></Txt>
          </SealRow>
          <Ticks>
            <TicksHead>
              分时成交
              <Caret $up $w={10} $h={6} $c={C.mid} />
            </TicksHead>
            {["377", "583", "290"].map((q) => (
              <TickRow key={q}>
                <span>10:30</span>
                <Txt $s={21} $c={C.green}>6.20</Txt>
                <Txt $s={21} $c={C.red}>{q}</Txt>
              </TickRow>
            ))}
          </Ticks>
        </Side>
      </Body>

      <QuoteStrip>
        <Quote $left>
          <QuoteLine>
            <span>卖<Unit>1</Unit></span>
            <Txt $s={22.3} $c={C.green}>6.20</Txt>
            <span><Wan n="10.2" /></span>
          </QuoteLine>
        </Quote>
        <Quote>
          <QuoteLine>
            <span>买<Unit>1</Unit></span>
            <span>--</span>
            <span>--</span>
          </QuoteLine>
        </Quote>
      </QuoteStrip>

      <Bottom>
        <BottomRow>
          <Index>
            <Caret $up $w={13} $h={7} $c={C.mid} />
            <TitleLine $h={43} $gap={0}>
              <Txt $s={23.8} $c={C.green}>13238.29</Txt>
            </TitleLine>
            <IndexName>
              <Txt $s={18.6} $c={C.mid}>煤炭行业</Txt>
              <Txt $s={24.3} $c={C.green}>-3.46%</Txt>
            </IndexName>
          </Index>
          <Action><TradeIcon />交易</Action>
          <Action><PostIcon />发帖</Action>
          <Action><AppsIcon />功能</Action>
          <Action><MoreIcon />设自选</Action>
        </BottomRow>
        <HomeBar />
      </Bottom>
    </Page>
  );
}
